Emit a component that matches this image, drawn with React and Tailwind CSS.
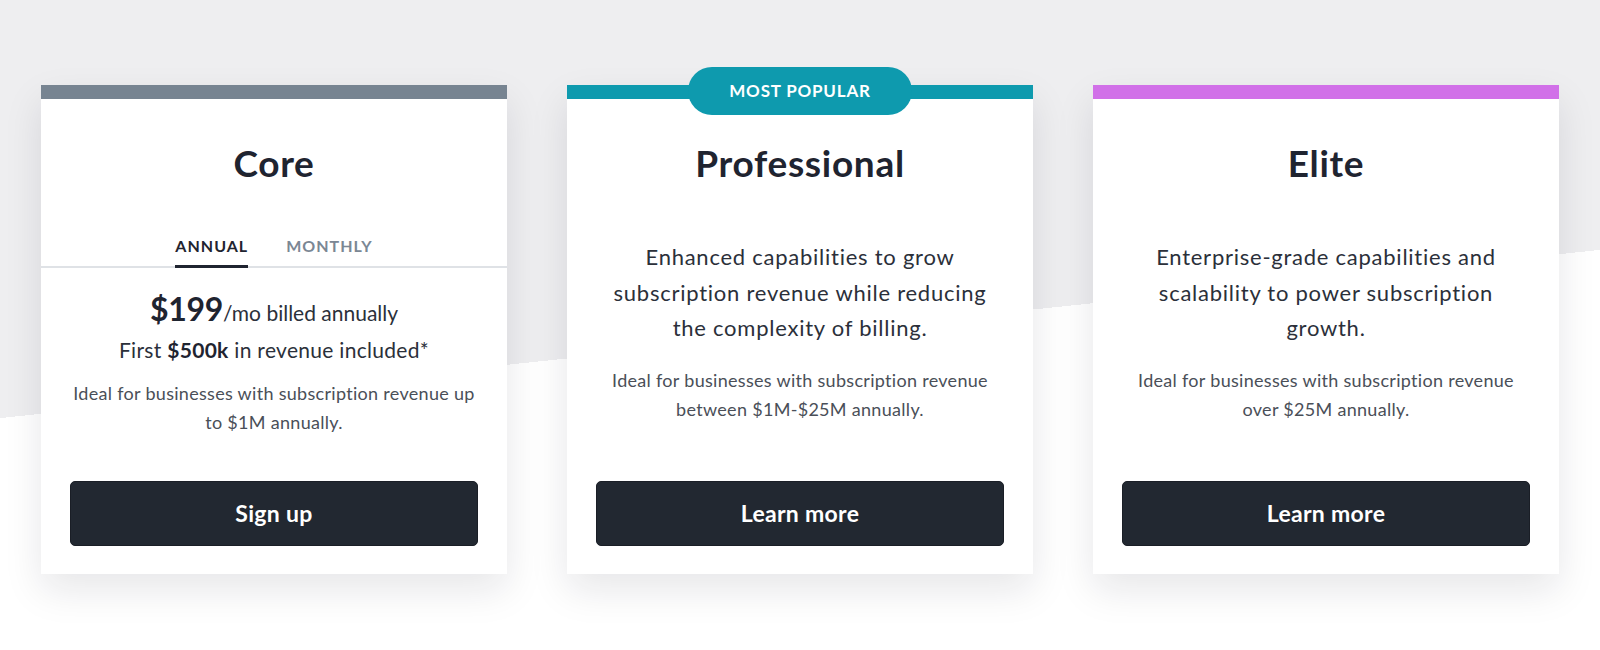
import React, { useState } from "react";

const plans = [
  {
    name: "Core",
    bar: "bg-[#778491]",
    cta: "Sign up",
  },
  {
    name: "Professional",
    bar: "bg-[#0e9aae]",
    cta: "Learn more",
    popular: true,
    desc: ["Enhanced capabilities to grow", "subscription revenue while reducing", "the complexity of billing."],
    ideal: ["Ideal for businesses with subscription revenue", "between $1M-$25M annually."],
  },
  {
    name: "Elite",
    bar: "bg-[#d170e8]",
    cta: "Learn more",
    desc: ["Enterprise-grade capabilities and", "scalability to power subscription", "growth."],
    ideal: ["Ideal for businesses with subscription revenue", "over $25M annually."],
  },
];

function CoreBody() {
  const [tab, setTab] = useState("annual");
  return (
    <>
      {/* billing toggle */}
      <div className="mt-[53px] flex justify-center gap-[38px] border-b-2 border-[#dfe2e6]">
        <button
          onClick={() => setTab("annual")}
          className={`-mb-[2px] border-b-[3px] pb-[9px] text-[16px] font-bold leading-[20px] tracking-[1px] ${tab === "annual" ? "border-[#1f2430] text-[#1f2430]" : "border-transparent text-[#7b8794]"}`}
        >
          ANNUAL
        </button>
        <button
          onClick={() => setTab("monthly")}
          className={`-mb-[2px] border-b-[3px] pb-[9px] text-[16px] font-bold leading-[20px] tracking-[1px] ${tab === "monthly" ? "border-[#1f2430] text-[#1f2430]" : "border-transparent text-[#7b8794]"}`}
        >
          MONTHLY
        </button>
      </div>

      <div className="px-[29px] text-center">
        <p className="mt-[21px] flex h-[40px] items-baseline justify-center text-[#2b303a]">
          <span className="text-[32px] font-bold leading-[40px] tracking-[-0.3px] text-[#1f2430]">$199</span>
          <span className="text-[21px] leading-[40px]">/mo billed annually</span>
        </p>
        <p className="mt-[6px] text-[21px] leading-[30px] tracking-[0.3px] text-[#2b303a]">
          First <span className="font-bold text-[#1f2430]">$500k</span> in revenue included*
        </p>
        <p className="mt-[14px] text-[18px] leading-[28.5px] tracking-[0.3px] text-[#4a4f58]">
          Ideal for businesses with subscription revenue up
          <br />
          to $1M annually.
        </p>
      </div>
    </>
  );
}

function PlanCard({ plan }) {
  return (
    <div className="relative flex h-[489px] w-[466px] flex-col bg-white shadow-[0_16px_36px_rgba(20,24,35,0.10)]">
      <div className={`h-[14px] ${plan.bar}`} />
      {plan.popular && (
        <div className="absolute left-1/2 top-[-18px] flex h-[48px] w-[224px] -translate-x-1/2 items-center justify-center rounded-[24px] bg-[#0e9aae] text-[17px] font-bold tracking-[0.8px] text-white">
          MOST POPULAR
        </div>
      )}

      <h2 className="mt-[44px] text-center text-[37px] font-bold leading-[40px] tracking-[0.7px] text-[#1f2430]">{plan.name}</h2>

      {plan.name === "Core" ? (
        <CoreBody />
      ) : (
        <div className="px-[29px] text-center">
          <p className="mt-[56px] text-[22px] leading-[35.5px] tracking-[0.75px] text-[#2b303a]">
            {plan.desc.map((line, i) => (
              <span key={i} className="block">
                {line}
              </span>
            ))}
          </p>
          <p className="mt-[20px] text-[18px] leading-[29px] tracking-[0.3px] text-[#4a4f58]">
            {plan.ideal[0]}
            <br />
            {plan.ideal[1]}
          </p>
        </div>
      )}

      <div className="mt-auto px-[29px] pb-[28px]">
        <button className="h-[65px] w-full rounded-[5px] border border-[#1a1e26] bg-[#222831] text-[23px] font-bold tracking-[0.3px] text-white">
          {plan.cta}
        </button>
      </div>
    </div>
  );
}

export default function App() {
  return (
    <div className="h-[650px] w-full overflow-hidden bg-[linear-gradient(174deg,#eeeef0_51.1%,#ffffff_51.1%)] font-['Lato','Liberation_Sans',sans-serif] antialiased">
      <div className="flex gap-[60px] pl-[41px] pt-[85px]">
        {plans.map((p) => (
          <PlanCard key={p.name} plan={p} />
        ))}
      </div>
    </div>
  );
}
